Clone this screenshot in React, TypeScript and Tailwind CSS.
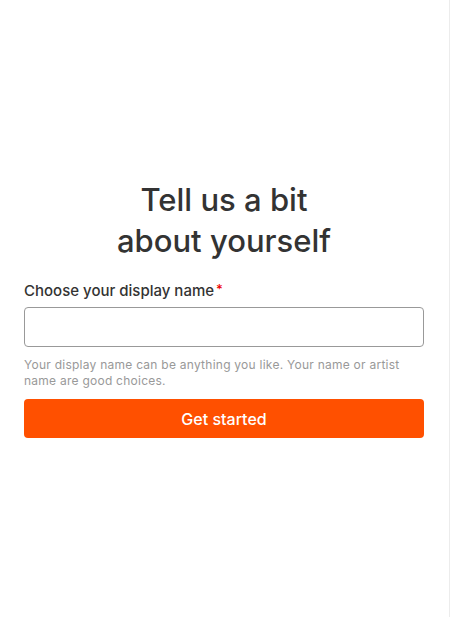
export default function App() {
  return (
    <div className="flex min-h-[617px] w-[450px] bg-white" style={{ fontFamily: "Inter, 'Noto Sans', sans-serif" }}>
      <main className="w-[448px] px-6 pt-[179px]">
        <h1 className="text-center text-[31px] font-medium leading-[41px] text-[#333]">
          Tell us a bit
          <br />
          about yourself
        </h1>
        <form className="mt-5" onSubmit={(e) => e.preventDefault()}>
          <label className="flex items-start text-[15px] font-medium leading-5 text-[#333]">
            Choose your display name
            <span className="ml-0.5 text-[13px] leading-4 text-[#e00]">*</span>
          </label>
          <input
            type="text"
            className="mt-1.5 block h-10 w-full rounded border border-[#999] bg-white px-3 text-sm outline-none"
          />
          <p className="mt-2.5 text-xs leading-4 tracking-[0.25px] text-[#999]">
            Your display name can be anything you like. Your name or artist name are good choices.
          </p>
          <button
            type="submit"
            className="mt-2.5 block h-[39px] w-full rounded bg-[#ff5000] text-base font-medium text-white"
          >
            Get started
          </button>
        </form>
      </main>
      <div className="w-px" />
      <div className="w-px bg-[#ececec]" />
    </div>
  );
}
